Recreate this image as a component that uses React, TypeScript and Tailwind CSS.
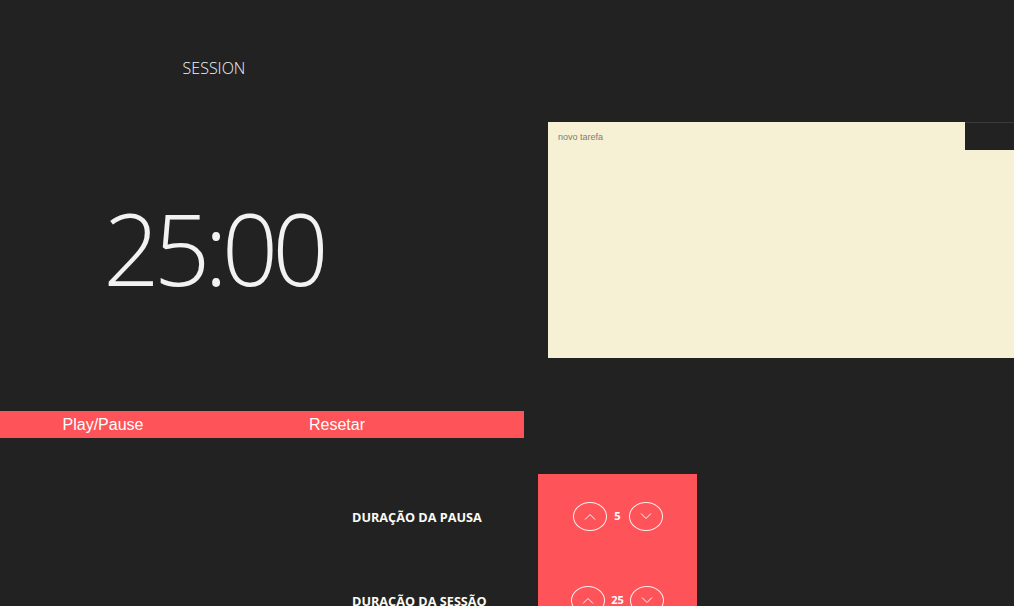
import { useState } from 'react';

function Chevron({ dir }: { dir: 'up' | 'down' }) {
  return (
    <svg width="12" height="7" viewBox="0 0 12 7" fill="none" stroke="white" strokeWidth="1">
      {dir === 'up' ? <path d="M1 6.5 L6 1.5 L11 6.5" /> : <path d="M1 0.5 L6 5.5 L11 0.5" />}
    </svg>
  );
}

function Stepper({ value, onUp, onDown }: { value: number; onUp: () => void; onDown: () => void }) {
  return (
    <div className="flex items-center justify-center gap-[6px]">
      <button
        onClick={onUp}
        className="w-[34px] h-[29px] rounded-[50%] border border-white/90 flex items-center justify-center"
      >
        <Chevron dir="up" />
      </button>
      <span className="text-[11px] font-bold text-white min-w-[10px] text-center">{value}</span>
      <button
        onClick={onDown}
        className="w-[34px] h-[29px] rounded-[50%] border border-white/90 flex items-center justify-center"
      >
        <Chevron dir="down" />
      </button>
    </div>
  );
}

export default function App() {
  const [pause, setPause] = useState(5);
  const [session, setSession] = useState(25);

  const rows = [
    { label: 'DURAÇÃO DA PAUSA', value: pause, set: setPause },
    { label: 'DURAÇÃO DA SESSÃO', value: session, set: setSession },
  ];

  return (
    <div className="w-full h-[606px] overflow-hidden bg-[#222222] font-['Open_Sans',sans-serif]">
      {/* Top */}
      <div className="flex">
        <div className="w-[524px] shrink-0">
          <div className="w-[428px] mt-[56px] h-[24px] leading-[24px] text-center text-[16px] font-light text-[#eef4f6]">
            SESSION
          </div>
          <div className="w-[426px] mt-[118px] h-[100px] leading-[100px] text-center text-[99px] font-light tracking-[-6px] text-[#f2f2f2]">
            25:00
          </div>
          <div className="mt-[113px] h-[27px] pt-px bg-[#fe5358] flex items-center font-['Liberation_Sans',Arial,sans-serif] text-[16px] text-[#fdfdfd]">
            <button className="w-[206px] text-center">Play/Pause</button>
            <button className="w-[262px] text-center">Resetar</button>
          </div>
        </div>

        {/* Task panel */}
        <div className="relative ml-[24px] mt-[122px] w-[466px] h-[236px] bg-[#f6f0d4]">
          <div className="pl-[10px] pt-[9px] text-[9px] leading-[12px] text-[#7d7d78] font-['Liberation_Sans',Arial,sans-serif]">
            novo tarefa
          </div>
          <div className="absolute top-0 right-0 w-[49px] h-[28px] bg-[#222222] border-t border-[#3a3a3a]" />
        </div>
      </div>

      {/* Durations */}
      <div className="mt-[36px] flex">
        <div className="w-[352px] shrink-0" />
        <div className="flex flex-col">
          {rows.map((r) => (
            <div key={r.label} className="flex h-[84px]">
              <div className="w-[186px] pt-[3px] flex items-center text-[12.7px] font-bold text-[#fbfbf2]">{r.label}</div>
              <div className="w-[159px] bg-[#fe5358] flex items-center justify-center">
                <Stepper value={r.value} onUp={() => r.set(r.value + 1)} onDown={() => r.set(Math.max(1, r.value - 1))} />
              </div>
            </div>
          ))}
        </div>
      </div>
    </div>
  );
}
